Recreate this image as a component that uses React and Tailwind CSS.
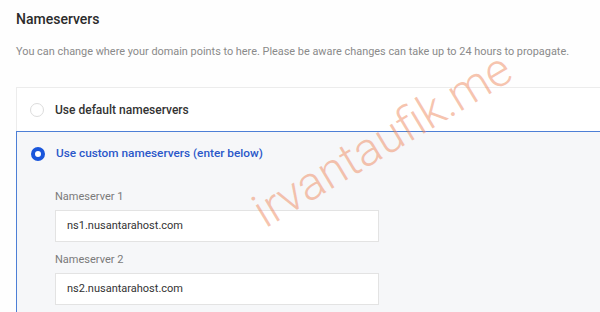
import React from "react";

const Radio = ({ checked }) =>
  checked ? (
    <span className="w-[14px] h-[14px] rounded-full border-[4px] border-[#1a56db] bg-white shrink-0" />
  ) : (
    <span className="w-[14px] h-[14px] rounded-full border border-[#dcdcdc] bg-white shrink-0" />
  );

const Field = ({ label, value }) => (
  <div className="flex flex-col">
    <label className="text-[11px] text-[#7a7a7a] leading-[16px]">{label}</label>
    <div className="mt-[5px] w-[324px] h-[32px] border border-[#e3e3e3] bg-white flex items-center px-[11px] text-[11px] text-[#333]">
      {value}
    </div>
  </div>
);

export default function App() {
  return (
    <div className="relative w-[600px] h-[312px] overflow-hidden bg-[#fefefe] font-['Roboto','Liberation_Sans',sans-serif]">
      <div className="pl-[16px] pt-[10px]">
        <h2 className="text-[14px] leading-[18px] font-medium text-[#2b2b2b]">Nameservers</h2>
        <p className="mt-[16px] text-[10.9px] leading-[16px] text-[#8a8a8a] whitespace-nowrap">
          You can change where your domain points to here. Please be aware changes can take up to 24 hours to propagate.
        </p>

        <div className="mt-[27px] w-[620px] border-t border-l border-[#ececec]">
          <div className="h-[43px] flex items-center pl-[13px] gap-[11px] bg-white">
            <Radio />
            <span className="text-[12px] font-medium text-[#333]">Use default nameservers</span>
          </div>
          <div className="border border-[#4d7fd6] -ml-px bg-[#f6f7f9] pb-[20px]">
            <div className="h-[43px] flex items-center pl-[14px] gap-[11px]">
              <Radio checked />
              <span className="text-[11.8px] font-medium text-[#2b58c9]">Use custom nameservers (enter below)</span>
            </div>
            <div className="pl-[38px] pt-[14px] flex flex-col gap-[10px]">
              <Field label="Nameserver 1" value="ns1.nusantarahost.com" />
              <Field label="Nameserver 2" value="ns2.nusantarahost.com" />
            </div>
          </div>
        </div>
      </div>

      <div className="absolute left-[236px] top-[116px] -rotate-[31deg] origin-center text-[47px] font-light text-[#ee8a60]/50 whitespace-nowrap pointer-events-none leading-none">
        irvantaufik.me
      </div>
    </div>
  );
}
